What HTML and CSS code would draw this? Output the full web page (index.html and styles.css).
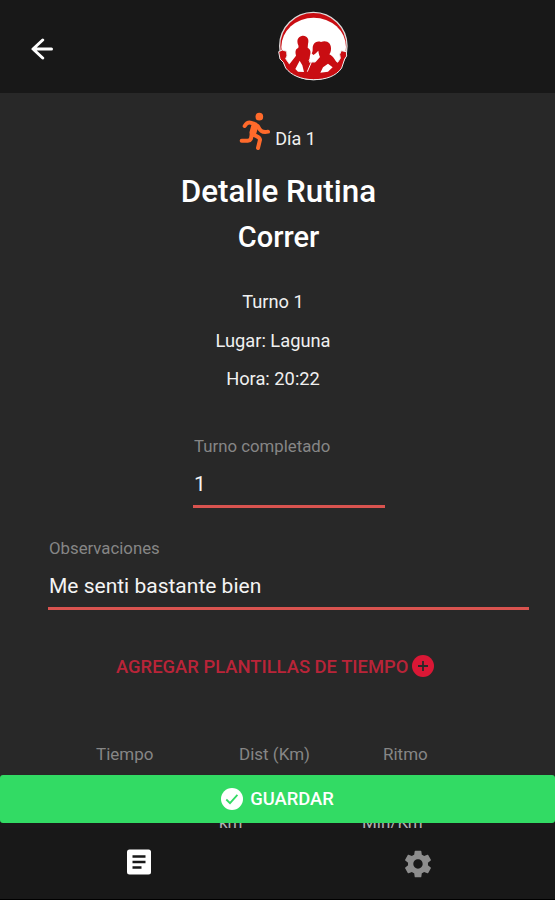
FILE: index.html
```html
<!DOCTYPE html>
<html lang="es">
<head>
    <meta charset="UTF-8">
    <meta name="viewport" content="width=device-width, initial-scale=1">
    <title>Detalle Rutina</title>
    <link rel="stylesheet" href="styles.css">
</head>
<body>
    <header class="toolbar">
        <a class="back" href="#" aria-label="Volver">
            <svg width="22" height="22" viewBox="0 0 22 22">
                <path d="M11.7 2L2 11l9.7 9M2.2 11H20.5" />
            </svg>
        </a>
        <svg class="logo" viewBox="42 30 216 216">
            <circle cx="151" cy="138" r="101" fill="#c90d12" stroke="#ddd" stroke-width="4" />
            <ellipse cx="152" cy="141" rx="97" ry="88" fill="#fff" />
            <path fill="#c90d12" stroke="#eee" stroke-width="3" d="M47 155l11-5 13 4 1 14-4 8 12 17 22-7h96l22 7 12-18-2-12 5-11 15 3 1 13-6 9-9 27c-17 25-48 35-84 35-38 0-68-14-84-35l-7-17-10-10z" />
            <path fill="#c90d12" d="M78 194l21-27c-3-11-2-19 5-22 3-2 3-4 2-9-6-14-2-25 10-28 15-3 24 9 19 24l-1 11c9 5 10 13 7 23l-3 21-6 26-34 0z" />
            <path fill="#c90d12" d="M151 165l-5-5c6-9 0-18 6-27 5-8 13-10 22-7 17-7 31 3 30 20 0 7-2 13-5 17 11 5 13 12 21 22l13 10-26 27h-66l15-34 15-17c-3-6-4-12-5-19-3 2-6 7-15 13z" />
            <path fill="#fff" d="M97 207l13-25 8 14 5 20-18-1zM172 218l8-16 15-11 14 11-14 13z" />
            <path fill="none" stroke="#fff" stroke-width="3" d="M157 166l-11 8-2 15-11 26M137 181l10-6" />
        </svg>
    </header>

    <main class="content">
        <div class="day">
            <svg class="runner" viewBox="210 36 96 117">
                <circle cx="271" cy="50" r="11.5" />
                <path d="M227 78c5-8 10-11 17-10l16 5M258 77l-7 24M266 78c6 12 12 21 31 17M251 102c9 8 21 6 22 17l-6 25M248 102c-1 14-2 19-12 20h-18" />
                <path class="torso" d="M257 79l-5 18" />
            </svg>
            <span>Día 1</span>
        </div>
        <h1>Detalle Rutina</h1>
        <h2>Correr</h2>

        <div class="info">
            <p>Turno 1</p>
            <p>Lugar: Laguna</p>
            <p>Hora: 20:22</p>
        </div>

        <label class="field field-turno">
            <span>Turno completado</span>
            <input type="text" value="1">
        </label>
        <label class="field field-obs">
            <span>Observaciones</span>
            <input type="text" value="Me senti bastante bien">
        </label>

        <button class="add" type="button">
            <span>AGREGAR PLANTILLAS DE TIEMPO</span>
            <svg width="22" height="22" viewBox="0 0 22 22">
                <circle cx="11" cy="11" r="11" fill="#da1735" />
                <path d="M11 6v10M6 11h10" stroke="#282828" stroke-width="1.8" />
            </svg>
        </button>

        <div class="times">
            <span>Tiempo</span>
            <span>Dist (Km)</span>
            <span>Ritmo</span>
        </div>
        <div class="times units">
            <span></span>
            <span>km</span>
            <span>Min/Km</span>
        </div>

        <button class="save" type="button">
            <svg width="22" height="22" viewBox="0 0 22 22">
                <circle cx="11" cy="11" r="11" fill="#fff" />
                <path d="M5.3 11.5l3.7 3.6 7.4-8.3" fill="none" stroke="#32db64" stroke-width="1.8" />
            </svg>
            <span>GUARDAR</span>
        </button>
    </main>

    <nav class="tabs">
        <a class="tab" href="#" aria-label="Rutinas">
            <svg width="26" height="26" viewBox="0 0 26 26">
                <rect x="1" y="0.5" width="24" height="25" rx="2.5" fill="#fff" />
                <path d="M6.5 7.5h13M6.5 13h13M6.5 18.5h9" stroke="#181818" stroke-width="2.6" />
            </svg>
        </a>
        <a class="tab" href="#" aria-label="Ajustes">
            <svg class="gear" width="32" height="32" viewBox="0 0 24 24">
                <path fill="#8d8d8d" d="M19.43 12.98c.04-.32.07-.64.07-.98s-.03-.66-.07-.98l2.11-1.65c.19-.15.24-.42.12-.64l-2-3.46c-.12-.22-.39-.3-.61-.22l-2.49 1c-.52-.4-1.08-.73-1.69-.98l-.38-2.65C14.46 2.18 14.25 2 14 2h-4c-.25 0-.46.18-.49.42l-.38 2.65c-.61.25-1.17.59-1.69.98l-2.49-1c-.23-.09-.49 0-.61.22l-2 3.46c-.13.22-.07.49.12.64l2.11 1.65c-.04.32-.07.65-.07.98s.03.66.07.98l-2.11 1.65c-.19.15-.24.42-.12.64l2 3.46c.12.22.39.3.61.22l2.49-1c.52.4 1.08.73 1.69.98l.38 2.65c.03.24.24.42.49.42h4c.25 0 .46-.18.49-.42l.38-2.65c.61-.25 1.17-.59 1.69-.98l2.49 1c.23.09.49 0 .61-.22l2-3.46c.12-.22.07-.49-.12-.64l-2.11-1.65zM12 15.5c-1.93 0-3.5-1.57-3.5-3.5s1.57-3.5 3.5-3.5 3.5 1.57 3.5 3.5-1.57 3.5-3.5 3.5z" />
            </svg>
        </a>
    </nav>
</body>
</html>
```

FILE: styles.css
```css
* {
    box-sizing: border-box;
}

body {
    display: flex;
    flex-direction: column;
    height: 100vh;
    margin: 0;
    overflow: hidden;
    font-family: Roboto, "Liberation Sans", sans-serif;
    font-size: 18px;
    color: #f0f0f0;
    background-color: #282828;
}

button {
    padding: 0;
    border: none;
    font-family: inherit;
    cursor: pointer;
}

svg {
    display: block;
    flex: none;
}

/* header */
.toolbar {
    display: grid;
    grid-template-columns: 277px 72px;
    height: 93px;
    flex: none;
    background-color: #181818;
}

.back {
    padding: 38px 0 0 31px;
}

.back path {
    fill: none;
    stroke: #fff;
    stroke-width: 3;
    stroke-linecap: round;
    stroke-linejoin: round;
}

.logo {
    width: 72px;
    height: 72px;
    margin-top: 10px;
}

/* content */
.content {
    position: relative;
    flex: 1;
    min-height: 0;
    overflow: hidden;
}

.day {
    display: flex;
    justify-content: center;
    gap: 4px;
    padding-top: 19px;
    height: 76px;
    line-height: 54px;
}

.runner {
    width: 32px;
    height: 39px;
}

.runner circle {
    fill: #ff6a2b;
}

.runner path {
    fill: none;
    stroke: #ff6a2b;
    stroke-width: 12;
    stroke-linecap: round;
    stroke-linejoin: round;
}

.runner .torso {
    stroke-width: 21;
}

h1,
h2 {
    margin: 0;
    padding-left: 2px;
    text-align: center;
    font-weight: 500;
    color: #fff;
}

h1 {
    font-size: 31.4px;
    line-height: 46px;
}

h2 {
    font-size: 29px;
    line-height: 44px;
}

.info {
    padding: 24px 9px 0 0;
    text-align: center;
    font-size: 18.3px;
}

.info p {
    margin: 0;
    line-height: 38.7px;
}

.field {
    display: flex;
    flex-direction: column;
}

.field span {
    padding-left: 1px;
    font-size: 16.8px;
    line-height: 20px;
    color: #868686;
}

.field input {
    width: 100%;
    height: 45px;
    margin-top: 7px;
    padding: 0 0 1px 1px;
    border: none;
    border-bottom: 3px solid #d9534f;
    background: none;
    font-family: inherit;
    font-size: 21px;
    color: #f4f4f4;
    outline: none;
}

.field-turno {
    width: 192px;
    margin: 37px 0 0 193px;
}

.field-obs {
    width: 481px;
    margin: 30px 0 0 48px;
}

.add {
    display: flex;
    align-items: center;
    gap: 4px;
    height: 30px;
    margin: 41px 0 0 116px;
    background: none;
    font-size: 18.4px;
    font-weight: 500;
    color: #b92438;
}

.times {
    display: grid;
    grid-template-columns: 143px 144px 1fr;
    padding: 63px 0 0 96px;
    font-size: 17px;
    line-height: 20px;
    color: #868686;
}

.units {
    grid-template-columns: 123px 143px 1fr;
    margin-top: 48px;
    padding-top: 0;
    color: #b0b0b0;
    background-color: #1a1919;
}

.save {
    position: absolute;
    left: 0;
    right: 0;
    bottom: 5px;
    display: flex;
    align-items: center;
    justify-content: center;
    gap: 7px;
    height: 48px;
    padding-bottom: 1px;
    border-radius: 3px;
    background-color: #32db64;
    font-size: 18.4px;
    font-weight: 500;
    color: #fff;
}

/* tabs */
.tabs {
    display: grid;
    grid-template-columns: 1fr 1fr;
    height: 72px;
    flex: none;
    border-bottom: 1px solid #000;
    background-color: #181818;
}

.tab {
    display: flex;
    justify-content: center;
    padding-top: 21px;
}

.gear {
    margin: -1px 0 0 3px;
}
```
